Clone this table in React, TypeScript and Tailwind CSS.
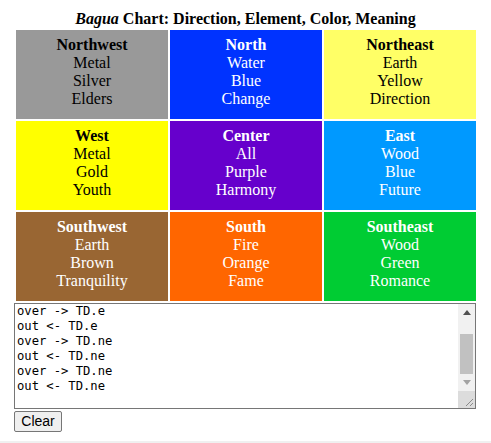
type Cell = {
  dir: string;
  element: string;
  color: string;
  meaning: string;
  bg: string;
  text: string;
};

const cells: Cell[] = [
  { dir: "Northwest", element: "Metal", color: "Silver", meaning: "Elders", bg: "bg-[#999999]", text: "text-black" },
  { dir: "North", element: "Water", color: "Blue", meaning: "Change", bg: "bg-[#0033ff]", text: "text-white" },
  { dir: "Northeast", element: "Earth", color: "Yellow", meaning: "Direction", bg: "bg-[#ffff66]", text: "text-black" },
  { dir: "West", element: "Metal", color: "Gold", meaning: "Youth", bg: "bg-[#ffff00]", text: "text-black" },
  { dir: "Center", element: "All", color: "Purple", meaning: "Harmony", bg: "bg-[#6600cc]", text: "text-white" },
  { dir: "East", element: "Wood", color: "Blue", meaning: "Future", bg: "bg-[#0099ff]", text: "text-white" },
  { dir: "Southwest", element: "Earth", color: "Brown", meaning: "Tranquility", bg: "bg-[#996633]", text: "text-white" },
  { dir: "South", element: "Fire", color: "Orange", meaning: "Fame", bg: "bg-[#ff6600]", text: "text-white" },
  { dir: "Southeast", element: "Wood", color: "Green", meaning: "Romance", bg: "bg-[#00cc33]", text: "text-white" },
];

const log = [
  "over -> TD.e",
  "out <- TD.e",
  "over -> TD.ne",
  "out <- TD.ne",
  "over -> TD.ne",
  "out <- TD.ne",
];

function Scrollbar() {
  return (
    <div className="flex w-[17px] shrink-0 flex-col bg-[#f1f1f1]">
      <div className="flex h-[17px] items-center justify-center">
        <svg width="8" height="5" viewBox="0 0 8 5">
          <path d="M0 5 L4 0 L8 5 Z" fill="#505050" />
        </svg>
      </div>
      <div className="h-[13px]" />
      <div className="mx-[2px] h-[40px] bg-[#c1c1c1]" />
      <div className="flex h-[17px] items-center justify-center">
        <svg width="8" height="5" viewBox="0 0 8 5">
          <path d="M0 0 L8 0 L4 5 Z" fill="#a3a3a3" />
        </svg>
      </div>
      <div className="flex-1" />
      <div className="relative h-[17px] bg-[#dcdcdc]">
        <svg className="absolute bottom-0 right-0" width="17" height="17" viewBox="0 0 17 17">
          <path d="M15 8 L8 15 M15 12 L12 15" stroke="#8a8a8a" strokeWidth="1" />
        </svg>
      </div>
    </div>
  );
}

export default function App() {
  return (
    <div className="relative h-[443px] w-[491px] bg-white font-['Liberation_Serif',serif] text-black">
      <div className="pt-[10px] text-center text-[16px] font-bold leading-[18px]">
        <i>Bagua</i> Chart: Direction, Element, Color, Meaning
      </div>

      <div className="mx-[16px] mt-[2px] grid w-[460px] grid-cols-3 gap-[2px]">
        {cells.map((c) => (
          <div
            key={c.dir}
            className={`flex h-[89px] flex-col items-center justify-center pb-[5px] text-[16px] leading-[18px] ${c.bg} ${c.text}`}
          >
            <b>{c.dir}</b>
            <span>{c.element}</span>
            <span>{c.color}</span>
            <span>{c.meaning}</span>
          </div>
        ))}
      </div>

      <div className="ml-[14px] mt-[2px] flex h-[106px] w-[462px] border border-[#767676] bg-white">
        <div className="flex-1 overflow-hidden pl-[2px]">
          <div className="font-['DejaVu_Sans_Mono',monospace] text-[12.2px] leading-[15px] text-black">
            {log.map((line, i) => (
              <div key={i} className="whitespace-pre">
                {line}
              </div>
            ))}
          </div>
        </div>
        <Scrollbar />
      </div>

      <div className="ml-[14px]">
        <button className="h-[21px] w-[48px] rounded-[2px] border border-[#767676] bg-[#efefef] font-['Liberation_Sans',Arial,sans-serif] text-[14px] leading-[19px] text-black">
          Clear
        </button>
      </div>

      <div className="absolute bottom-0 left-0 h-[2px] w-full bg-[#f0f0f0]" />
    </div>
  );
}
